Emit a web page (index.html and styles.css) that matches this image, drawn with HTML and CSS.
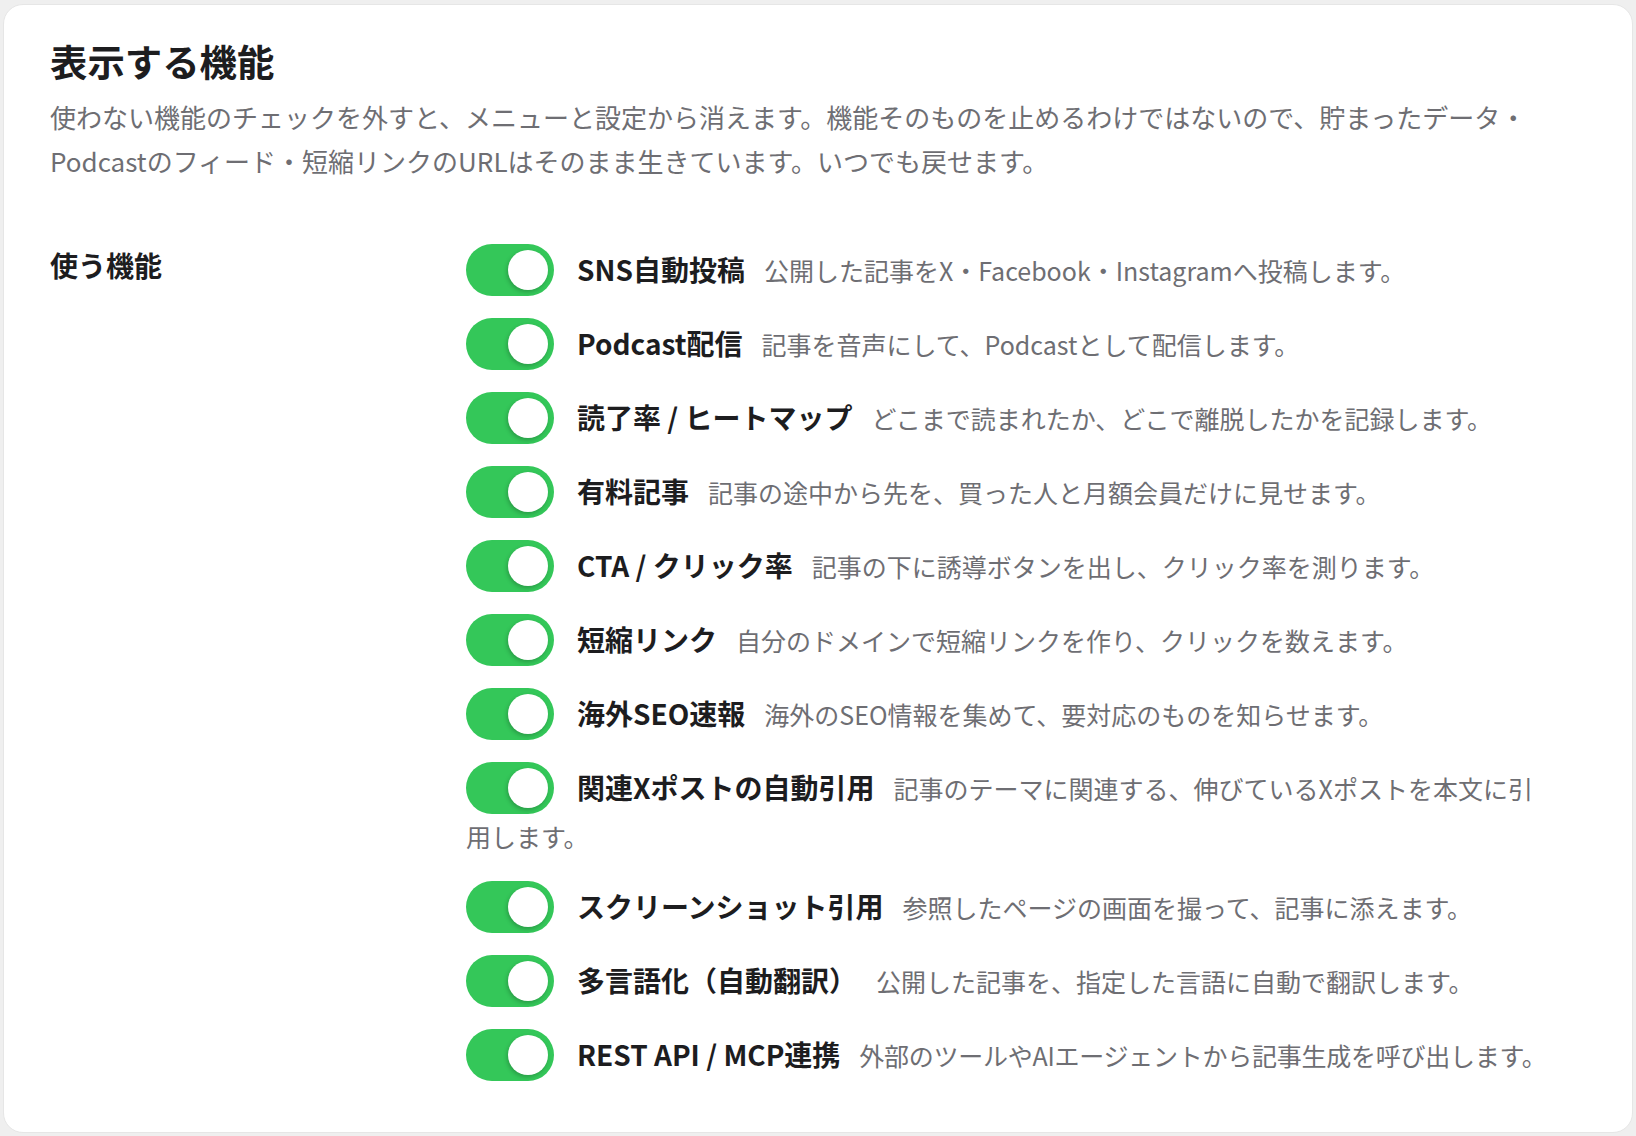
FILE: index.html
```html
<!DOCTYPE html>
<html lang="ja">
<head>
<meta charset="utf-8">
<title>表示する機能</title>
<link rel="stylesheet" href="styles.css">
</head>
<body>
<div class="page">
  <section class="card">
    <h1 class="card-title">表示する機能</h1>
    <p class="card-desc">使わない機能のチェックを外すと、メニューと設定から消えます。機能そのものを止めるわけではないので、貯まったデータ・Podcastのフィード・短縮リンクのURLはそのまま生きています。いつでも戻せます。</p>
    <div class="settings">
      <div class="settings-label">使う機能</div>
      <div class="features">
        <div class="feature"><span class="toggle"><span class="knob"></span></span><span class="name">SNS自動投稿</span><span class="desc">公開した記事をX・Facebook・Instagramへ投稿します。</span></div>
        <div class="feature"><span class="toggle"><span class="knob"></span></span><span class="name">Podcast配信</span><span class="desc">記事を音声にして、Podcastとして配信します。</span></div>
        <div class="feature"><span class="toggle"><span class="knob"></span></span><span class="name">読了率 / ヒートマップ</span><span class="desc">どこまで読まれたか、どこで離脱したかを記録します。</span></div>
        <div class="feature"><span class="toggle"><span class="knob"></span></span><span class="name">有料記事</span><span class="desc">記事の途中から先を、買った人と月額会員だけに見せます。</span></div>
        <div class="feature"><span class="toggle"><span class="knob"></span></span><span class="name">CTA / クリック率</span><span class="desc">記事の下に誘導ボタンを出し、クリック率を測ります。</span></div>
        <div class="feature"><span class="toggle"><span class="knob"></span></span><span class="name">短縮リンク</span><span class="desc">自分のドメインで短縮リンクを作り、クリックを数えます。</span></div>
        <div class="feature"><span class="toggle"><span class="knob"></span></span><span class="name">海外SEO速報</span><span class="desc">海外のSEO情報を集めて、要対応のものを知らせます。</span></div>
        <div class="feature"><span class="toggle"><span class="knob"></span></span><span class="name">関連Xポストの自動引用</span><span class="desc">記事のテーマに関連する、伸びているXポストを本文に引用します。</span></div>
        <div class="feature"><span class="toggle"><span class="knob"></span></span><span class="name">スクリーンショット引用</span><span class="desc">参照したページの画面を撮って、記事に添えます。</span></div>
        <div class="feature"><span class="toggle"><span class="knob"></span></span><span class="name">多言語化（自動翻訳）</span><span class="desc">公開した記事を、指定した言語に自動で翻訳します。</span></div>
        <div class="feature"><span class="toggle"><span class="knob"></span></span><span class="name">REST API / MCP連携</span><span class="desc desc-tight">外部のツールやAIエージェントから記事生成を呼び出します。</span></div>
      </div>
    </div>
  </section>
</div>
</body>
</html>
```
FILE: styles.css
```css
* { box-sizing: border-box; }
html, body {
  margin: 0;
  padding: 0;
  background: #efefef;
}
body {
  font-family: "Noto Sans CJK JP", "Noto Sans", sans-serif;
  color: #1d1d1f;
}
.page {
  padding: 4px 3px 4px 3px;
}
.card {
  background: #ffffff;
  border: 1px solid #e6e6e6;
  border-radius: 20px;
  padding: 32px 46px 51px 46px;
  min-height: 1128px;
}
.card-title {
  margin: 0;
  font-size: 37.4px;
  line-height: 1.3;
  font-weight: 700;
  color: #1d1d1f;
}
.card-desc {
  margin: 9px 0 0 0;
  font-size: 26px;
  line-height: 1.7;
  color: #6e6e73;
}
.settings {
  display: grid;
  grid-template-columns: 416px 1086px;
  margin-top: 59px;
}
.settings-label {
  font-size: 28px;
  font-weight: 700;
  line-height: 1.5;
  padding-top: 2px;
  color: #1d1d1f;
}
.features {
  display: flex;
  flex-direction: column;
  gap: 22px;
  padding-top: 2px;
}
.feature {
  font-size: 25px;
  line-height: 1.8;
}
.toggle {
  display: inline-block;
  vertical-align: -15px;
  width: 88px;
  height: 52px;
  padding: 6px;
  border-radius: 26px;
  background: #34c759;
  margin-right: 23px;
}
.knob {
  display: block;
  width: 40px;
  height: 40px;
  margin-left: auto;
  border-radius: 50%;
  background: #ffffff;
  box-shadow: -1px 2px 4px rgba(0, 0, 0, 0.22);
}
.name {
  font-size: 28px;
  font-weight: 700;
  color: #1d1d1f;
  margin-right: 19px;
}
.desc {
  color: #6e6e73;
}
.desc-tight {
  letter-spacing: -0.25px;
}
```
